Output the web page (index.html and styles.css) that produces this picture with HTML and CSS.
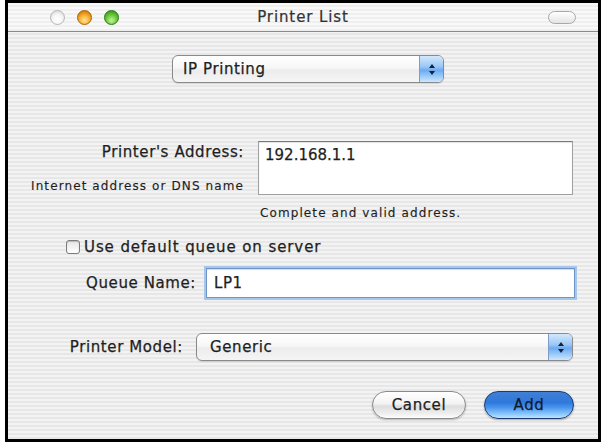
FILE: index.html
```html
<!DOCTYPE html>
<html>
<head>
<meta charset="utf-8">
<link rel="stylesheet" href="styles.css">
</head>
<body>
<div class="frame">
  <div class="titlebar">
    <div class="lights">
      <span class="light gray"></span>
      <span class="light orange"></span>
      <span class="light green"></span>
    </div>
    <div class="title">Printer List</div>
    <span class="pill"></span>
  </div>
  <div class="content">
    <div class="row-center">
      <div class="popup popup-top">
        <span class="popup-text">IP Printing</span>
        <span class="popup-arrows"><i class="up"></i><i class="down"></i></span>
      </div>
    </div>

    <div class="address-row">
      <div class="address-labels">
        <div class="label">Printer's Address:</div>
        <div class="hint">Internet address or DNS name</div>
      </div>
      <div class="field field-address">192.168.1.1</div>
    </div>

    <div class="status">Complete and valid address.</div>

    <div class="check-row">
      <span class="checkbox"></span>
      <span class="label check-label">Use default queue on server</span>
    </div>

    <div class="queue-row">
      <div class="label">Queue Name:</div>
      <div class="field field-queue">LP1</div>
    </div>

    <div class="model-row">
      <div class="label">Printer Model:</div>
      <div class="popup popup-model">
        <span class="popup-text">Generic</span>
        <span class="popup-arrows"><i class="up"></i><i class="down"></i></span>
      </div>
    </div>

    <div class="buttons">
      <div class="btn btn-cancel">Cancel</div>
      <div class="btn btn-add">Add</div>
    </div>
  </div>
</div>
</body>
</html>
```

FILE: styles.css
```css
html, body {
  margin: 0;
  padding: 0;
  background: #ffffff;
}
body {
  width: 604px;
  height: 442px;
  overflow: hidden;
  font-family: "DejaVu Sans", "Liberation Sans", sans-serif;
  color: #222;
}
.frame {
  margin-left: 5px;
  width: 590px;
  height: 436px;
  border: 3px solid #000;
  background: repeating-linear-gradient(to bottom, #f3f3f3 0px, #f3f3f3 2px, #e7e7e7 2px, #e7e7e7 4px);
  display: flex;
  flex-direction: column;
}
.titlebar {
  height: 28px;
  flex: none;
  border-bottom: 1px solid #8a8a8a;
  background: repeating-linear-gradient(to bottom, #f9f9f9 0px, #f9f9f9 2px, #efefef 2px, #efefef 4px);
  display: flex;
  align-items: center;
  position: relative;
}
.lights {
  display: flex;
  gap: 12px;
  margin-left: 42px;
  position: relative;
  z-index: 1;
}
.light {
  width: 15px;
  height: 15px;
  border-radius: 50%;
  display: block;
  box-sizing: border-box;
}
.light.gray {
  background: radial-gradient(circle at 50% 65%, #ffffff 0, #f6f6f6 45%, #cfcfcf 100%);
  border: 1px solid #b5b5b5;
}
.light.orange {
  background: radial-gradient(circle at 50% 72%, #ffe49a 0, #f7b032 45%, #d47a00 85%, #b86400 100%);
  border: 1px solid #a86000;
}
.light.green {
  background: radial-gradient(circle at 50% 72%, #c4f59a 0, #6ccb40 45%, #3a9a18 85%, #2a7a10 100%);
  border: 1px solid #2d7412;
}
.title {
  position: absolute;
  left: 0;
  right: 0;
  top: 5px;
  text-align: center;
  font-size: 15px;
  letter-spacing: 0.9px;
  color: #333;
  -webkit-text-stroke: 0.2px #333;
}
.pill {
  margin-left: auto;
  margin-right: 22px;
  width: 26px;
  height: 11px;
  border-radius: 7px;
  border: 1px solid #a8a8a8;
  background: linear-gradient(#ffffff, #e4e4e4);
  position: relative;
  z-index: 1;
}
.content {
  flex: 1;
  display: flex;
  flex-direction: column;
}
.label, .popup-text, .field, .btn {
  font-size: 15px;
  letter-spacing: 0.6px;
  color: #1e1e1e;
  -webkit-text-stroke: 0.25px #1e1e1e;
}
.row-center {
  display: flex;
  justify-content: center;
  margin-top: 23px;
  padding-left: 10px;
}
.popup {
  display: flex;
  align-items: center;
  height: 28px;
  box-sizing: border-box;
  border: 1px solid #8a8a8a;
  border-radius: 6px;
  background: linear-gradient(#ffffff, #f7f7f7 45%, #ececec 55%, #f5f5f5);
  box-shadow: 0 1px 1px rgba(0,0,0,0.12);
  overflow: hidden;
}
.popup-top {
  width: 272px;
}
.popup-text {
  flex: 1;
  padding-left: 10px;
}
.popup-arrows {
  width: 23px;
  height: 100%;
  border-left: 1px solid #7d9dc6;
  background: linear-gradient(#d3e8fd, #9cc8f6 40%, #6eaaf0 55%, #a9d3fc 85%, #cfe7ff);
  display: flex;
  flex-direction: column;
  align-items: center;
  justify-content: center;
  gap: 3px;
}
.popup-arrows i {
  width: 0;
  height: 0;
  border-left: 3px solid transparent;
  border-right: 3px solid transparent;
}
.popup-arrows .up { border-bottom: 4px solid #14233a; }
.popup-arrows .down { border-top: 4px solid #14233a; }

.address-row {
  display: flex;
  margin-top: 58px;
}
.address-labels {
  width: 236px;
  display: flex;
  flex-direction: column;
  align-items: flex-end;
}
.address-labels .label {
  margin-top: 2px;
}
.hint, .status {
  font-size: 12px;
  letter-spacing: 1.1px;
  color: #1e1e1e;
  -webkit-text-stroke: 0.15px #1e1e1e;
}
.hint {
  margin-top: 18px;
}
.field {
  background: #fff;
  border: 1px solid #a0a0a0;
  border-top-color: #7a7a7a;
  box-sizing: border-box;
  box-shadow: inset 0 1px 1px rgba(0,0,0,0.12);
}
.field-address {
  margin-left: 14px;
  width: 315px;
  height: 54px;
  padding: 4px 0 0 6px;
  letter-spacing: 0;
}
.status {
  margin-left: 252px;
  margin-top: 11px;
}
.check-row {
  display: flex;
  align-items: center;
  margin-top: 18px;
  margin-left: 58px;
  gap: 4px;
}
.checkbox {
  width: 14px;
  height: 14px;
  box-sizing: border-box;
  border: 1px solid #7c7c7c;
  border-radius: 3px;
  background: linear-gradient(#e6e6e6, #ffffff);
  box-shadow: inset 0 1px 1px rgba(0,0,0,0.2);
}
.check-label {
  letter-spacing: 0.9px;
}
.queue-row {
  display: flex;
  align-items: center;
  margin-top: 12px;
}
.queue-row .label {
  width: 188px;
  text-align: right;
}
.field-queue {
  margin-left: 10px;
  width: 369px;
  height: 30px;
  padding: 5px 0 0 7px;
  border: 1px solid #6f95c6;
  box-shadow: 0 0 0 2px #a6c6ea, inset 0 1px 1px rgba(0,0,0,0.15);
}
.model-row {
  display: flex;
  align-items: center;
  margin-top: 35px;
}
.model-row .label {
  width: 175px;
  text-align: right;
}
.popup-model {
  margin-left: 13px;
  width: 377px;
}
.popup-model .popup-text {
  padding-left: 13px;
}
.buttons {
  display: flex;
  justify-content: flex-end;
  gap: 18px;
  margin-top: 30px;
  padding-right: 24px;
}
.btn {
  height: 28px;
  border-radius: 14px;
  display: flex;
  align-items: center;
  justify-content: center;
  box-sizing: border-box;
}
.btn-cancel {
  width: 94px;
  border: 1px solid #8a8a8a;
  background: linear-gradient(#ffffff, #f3f3f3 45%, #dedede 55%, #f0f0f0 85%, #ffffff);
  box-shadow: 0 1px 2px rgba(0,0,0,0.25);
}
.btn-add {
  width: 90px;
  border: 1px solid #1b3b70;
  background: linear-gradient(#3f7fd6, #2f78dc 40%, #4a95ee 60%, #8cc8ff 85%, #bfe3ff);
  box-shadow: 0 1px 2px rgba(0,0,0,0.3);
  color: #0d1a2e;
}
```
